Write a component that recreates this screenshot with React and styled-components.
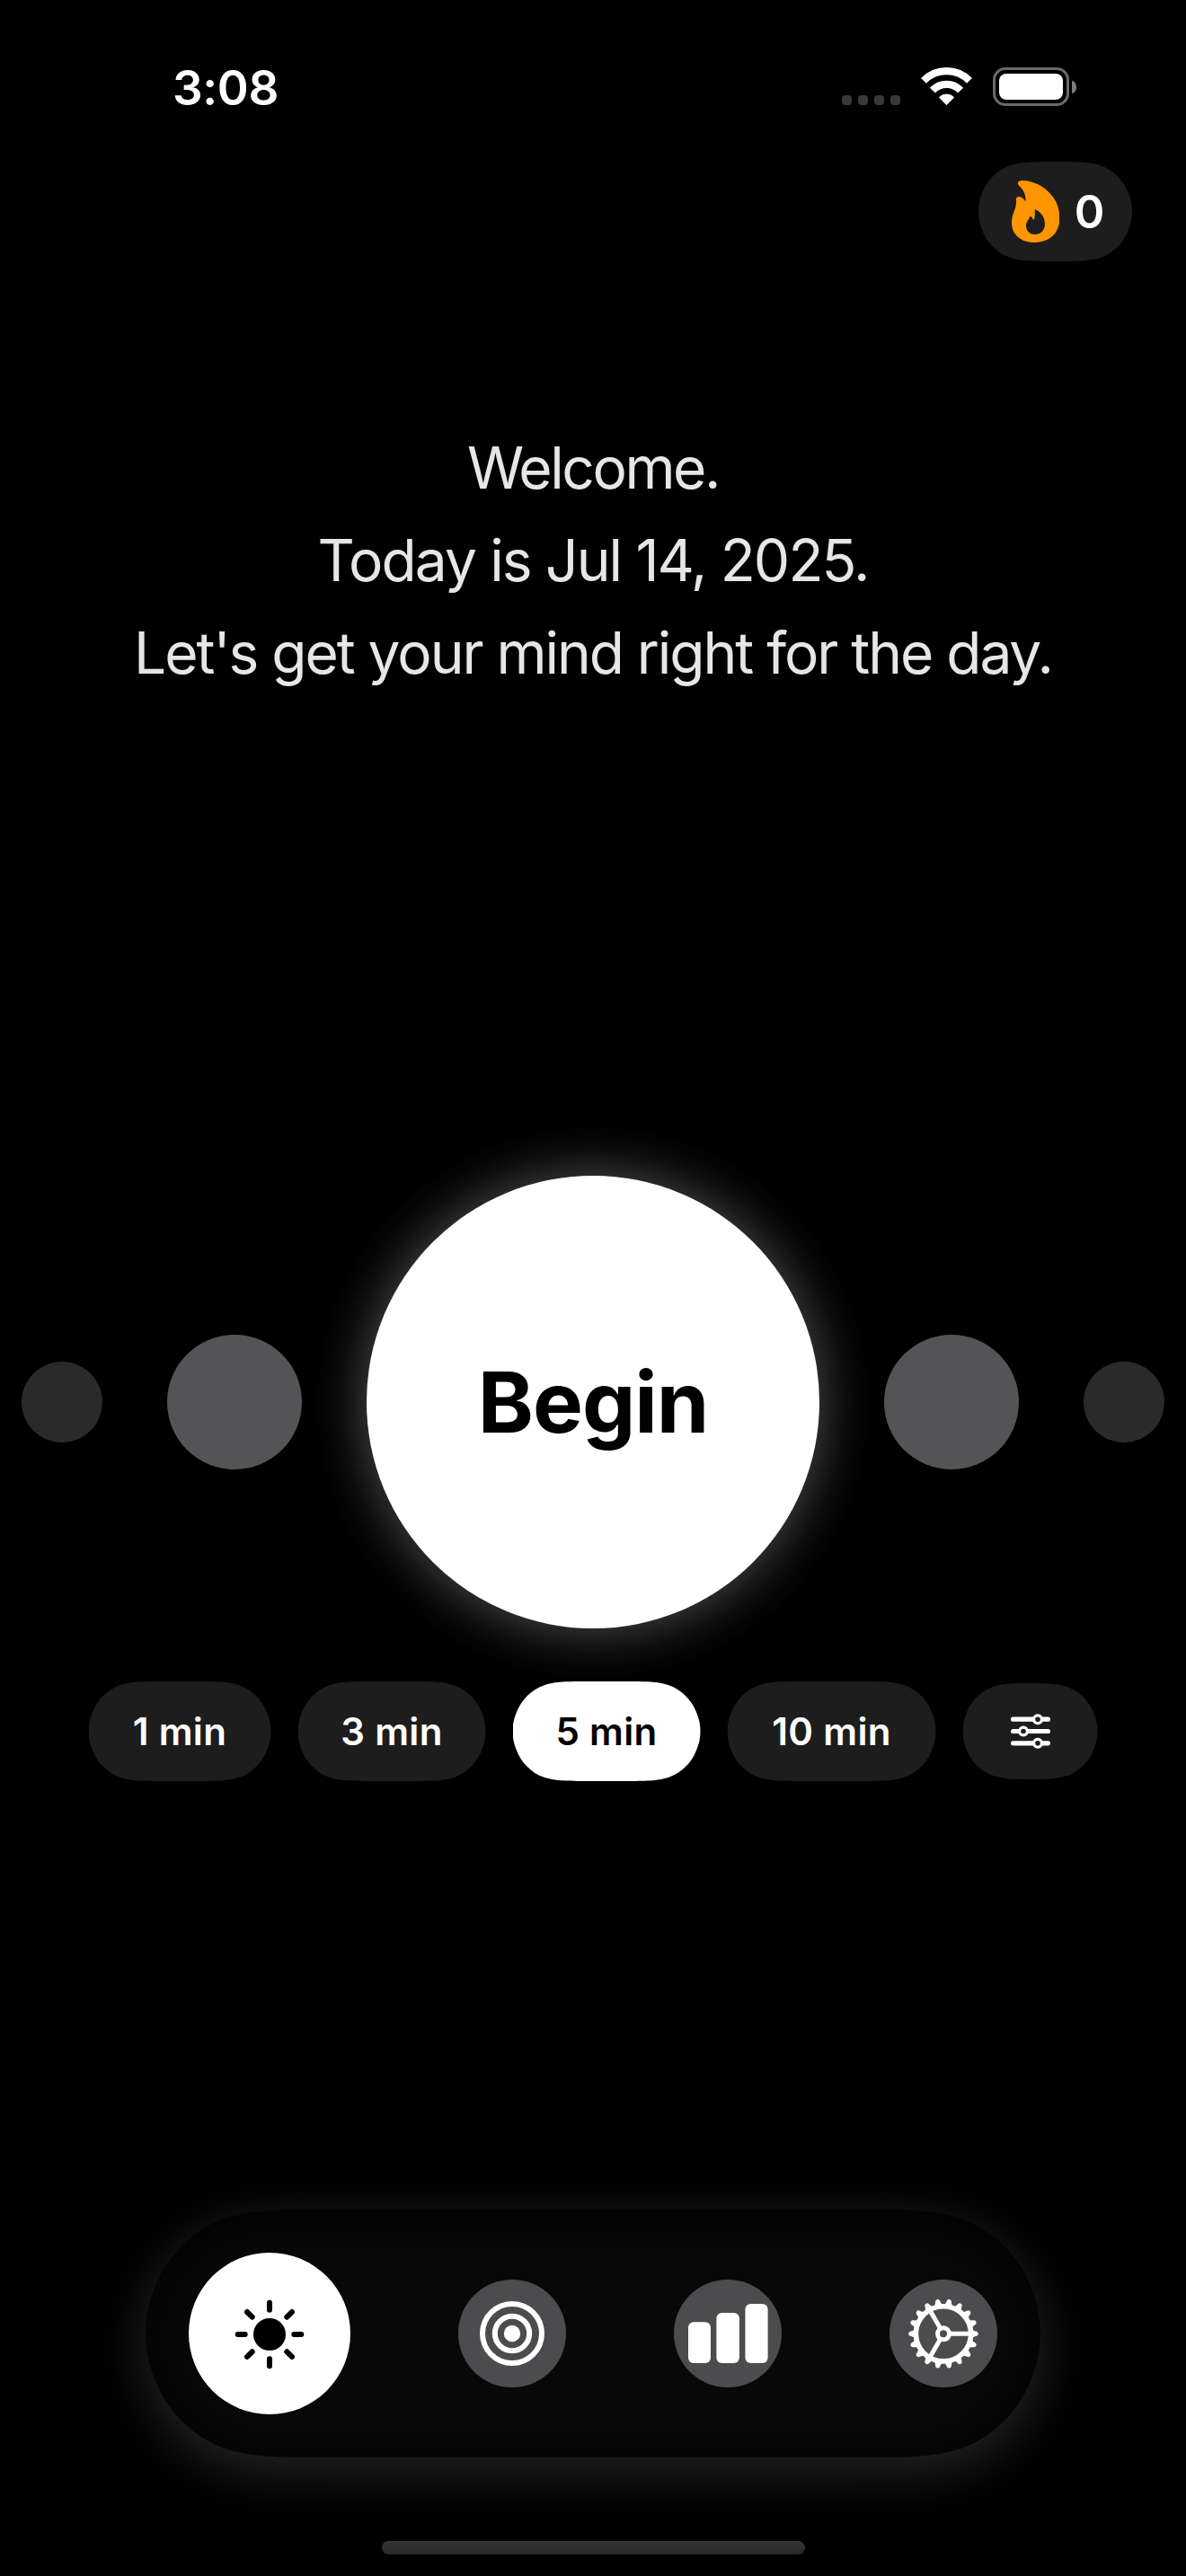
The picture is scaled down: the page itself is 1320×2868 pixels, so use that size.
import React from "react";
import styled, { createGlobalStyle } from "styled-components";

/* Continuous-corner capsule outline for a w x h box. */
const capsule = (w, h) => {
  const r = h / 2;
  const e = Math.min(1.528665 * r, w / 2);
  const p = (fx, fy, right, bottom) => {
    const x = fx * r;
    const y = fy * r;
    return `${(right ? w - x : x).toFixed(2)} ${(bottom ? h - y : y).toFixed(2)}`;
  };
  const k = e / r;
  const out = (rt, bt) =>
    `C${p(1.0885, 0, rt, bt)} ${p(0.8684, 0, rt, bt)} ${p(0.6315, 0.0749, rt, bt)}` +
    `C${p(0.3728, 0.1691, rt, bt)} ${p(0.1691, 0.3728, rt, bt)} ${p(0.0749, 0.6315, rt, bt)}` +
    `C${p(0.025, 0.75, rt, bt)} ${p(0, 0.87, rt, bt)} ${p(0, 1, rt, bt)}`;
  const back = (rt, bt) =>
    `C${p(0, 0.87, rt, bt)} ${p(0.025, 0.75, rt, bt)} ${p(0.0749, 0.6315, rt, bt)}` +
    `C${p(0.1691, 0.3728, rt, bt)} ${p(0.3728, 0.1691, rt, bt)} ${p(0.6315, 0.0749, rt, bt)}` +
    `C${p(0.8684, 0, rt, bt)} ${p(1.0885, 0, rt, bt)} ${p(k, 0, rt, bt)}`;
  return `path("M${p(k, 0, true, false)}${out(true, false)}${back(true, true)}L${p(k, 0, false, true)}${out(false, true)}${back(false, false)}Z")`;
};

const GlobalStyle = createGlobalStyle`
  * { box-sizing: border-box; }
  body { margin: 0; background: #000; }
  button { border: 0; margin: 0; padding: 0; font: inherit; color: inherit; }
`;

const Screen = styled.main`
  display: flex;
  flex-direction: column;
  align-items: center;
  width: 1320px;
  height: 2868px;
  overflow: hidden;
  background: #000;
  color: #fff;
  font-family: Inter, "Liberation Sans", sans-serif;
`;

const StatusBar = styled.header`
  display: flex;
  justify-content: space-between;
  align-items: flex-end;
  width: 100%;
  height: 118px;
  padding: 0 122px 0 192px;
`;

const Clock = styled.time`
  font-size: 53px;
  line-height: 40px;
  font-weight: 600;
  letter-spacing: -0.4px;
`;

const StatusIcons = styled.div`
  display: flex;
  align-items: flex-end;
`;

const Signal = styled.div`
  display: flex;
  gap: 7px;
  margin: 0 23px 1px 0;
`;

const SignalDot = styled.i`
  width: 11px;
  height: 11px;
  border-radius: 4px;
  background: #393939;
`;

const Battery = styled.div`
  display: flex;
  align-items: center;
  gap: 3px;
  margin-left: 23px;
`;

const BatteryCase = styled.div`
  width: 85px;
  height: 43px;
  padding: 4px;
  border: 3px solid #6a6a6a;
  border-radius: 14px;
`;

const BatteryLevel = styled.div`
  height: 100%;
  border-radius: 8px;
  background: #fff;
`;

const BatteryTip = styled.div`
  width: 5px;
  height: 14px;
  border-radius: 0 5px 5px 0 / 0 7px 7px 0;
  background: #7d7d7d;
`;

const StreakRow = styled.div`
  display: flex;
  justify-content: flex-end;
  width: 100%;
  padding: 62px 60px 0 0;
`;

const Pill = styled.button`
  display: flex;
  align-items: center;
  justify-content: center;
  flex: none;
  width: ${(p) => p.$w}px;
  height: ${(p) => p.$h || 111}px;
  clip-path: ${(p) => capsule(p.$w, p.$h || 111)};
  background: ${(p) => (p.$active ? "#fff" : "#1d1d1d")};
  color: ${(p) => (p.$active ? "#000" : "#fff")};
  font-size: 42px;
  font-weight: 600;
  letter-spacing: 0.3px;
`;

const StreakCount = styled.span`
  margin: 0 -5px 0 17px;
  font-size: 51px;
  letter-spacing: -1px;
`;

const Greeting = styled.p`
  margin: 178px 0 0;
  color: #e6e6e6;
  font-size: 64px;
  line-height: 103px;
  font-weight: 400;
  text-align: center;
`;

const Line = styled.span`
  display: block;
  letter-spacing: ${(p) => p.$track}px;
`;

const Carousel = styled.section`
  display: flex;
  align-items: center;
  gap: 72px;
  margin-top: 531px;
`;

const Dot = styled.div`
  flex: none;
  width: ${(p) => (p.$far ? 90 : 150)}px;
  height: ${(p) => (p.$far ? 90 : 150)}px;
  border-radius: 50%;
  background: ${(p) => (p.$far ? "#2a2a2a" : "#545456")};
`;

const BeginButton = styled.button`
  flex: none;
  width: 504px;
  height: 504px;
  border-radius: 50%;
  background: #fff;
  color: #000;
  font-size: 94px;
  font-weight: 700;
  letter-spacing: -1px;
  box-shadow: 0 0 60px rgba(255, 255, 255, 0.3), 0 0 120px rgba(255, 255, 255, 0.05);
`;

const Durations = styled.div`
  display: flex;
  align-items: center;
  gap: 30px;
  margin: 59px 0 477px;
`;

const NavGlow = styled.nav`
  filter: drop-shadow(0 15px 30px rgba(255, 255, 255, 0.15));
`;

const NavSurface = styled.div`
  display: flex;
  align-items: center;
  justify-content: space-between;
  width: 996px;
  height: 276px;
  padding: 0 48px;
  border-radius: 138px;
  clip-path: ${capsule(996, 276)};
  background: #080808;
  box-shadow: inset 0 8px 60px rgba(0, 0, 0, 0.9);
`;

const NavButton = styled.button`
  display: flex;
  align-items: center;
  justify-content: center;
  width: ${(p) => (p.$active ? 180 : 120)}px;
  height: ${(p) => (p.$active ? 180 : 120)}px;
  border-radius: 50%;
  background: ${(p) => (p.$active ? "#fff" : "#4c4c4e")};
  color: ${(p) => (p.$active ? "#000" : "#fff")};
`;

const HomeIndicator = styled.div`
  width: 471px;
  height: 15px;
  margin-top: 93px;
  border-radius: 8px;
  background: linear-gradient(#343434, #292929);
`;

const WifiIcon = () => (
  <svg width="57" height="43" viewBox="375 75 171 129" fill="none" stroke="#fff" strokeWidth="25">
    <path d="M384 119.500A107.500 107.500 0 0 1 537 119.500" />
    <path d="M413.700 152A63.500 63.500 0 0 1 507.300 152" />
    <path d="M436 175.500A34 34 0 0 1 485 175.500L460.500 200Z" fill="#fff" strokeWidth="3" strokeLinejoin="round" />
  </svg>
);

const FlameIcon = () => (
  <svg width="53.300" height="69" viewBox="120 75 160 207">
    <path
      fill="#ff9500"
      fillRule="evenodd"
      d="M141 82C143 76 149 75 156 75C190 76 226 92 250 120C271 144 280 168 280 204C280 251 245 282 195 282C150 282 120 255 120 217C120 180 137 175 135 137C135 129 142 127 150 130C157 133 163 139 166 146C169 125 161 108 143 90C141 87 140 84 141 82Z
         M197 171C215 178 231 195 231 220C231 242 215 255 198 255C180 255 168 243 168 226C168 211 178 208 181 194C187 195 190 201 193 208C198 198 198 188 197 171Z"
    />
  </svg>
);

const SlidersIcon = () => (
  <svg width="44" height="39" viewBox="0 0 44 39" fill="none" stroke="#fff" strokeLinecap="round">
    {[[30, 6.2], [14, 19.500], [30, 32.800]].map(([x, y]) => (
      <g key={y}>
        <path d={`M2.600 ${y}H41.400`} strokeWidth="5.200" />
        <circle cx={x} cy={y} r="4.400" fill="#1d1d1d" strokeWidth="3.200" />
      </g>
    ))}
  </svg>
);

const SunIcon = () => (
  <svg width="80" height="80" viewBox="-40 -41 80 80" fill="currentColor">
    <circle r="18" />
    {[0, 45, 90, 135, 180, 225, 270, 315].map((a) => (
      <path key={a} d="M27.300 0H35.300" transform={`rotate(${a})`} stroke="currentColor" strokeWidth="6" strokeLinecap="round" />
    ))}
  </svg>
);

const TargetIcon = () => (
  <svg width="80" height="80" viewBox="-40 -40 80 80" fill="none" stroke="currentColor" strokeWidth="6">
    <circle r="33" />
    <circle r="19.200" />
    <circle r="9.200" fill="currentColor" stroke="none" />
  </svg>
);

const BarsIcon = () => (
  <svg width="90" height="70" viewBox="-45 -35 90 70" fill="currentColor">
    <rect x="-44" y="-12.700" width="25" height="45.700" rx="6" />
    <rect x="-12.600" y="-23" width="25.500" height="56" rx="6" />
    <rect x="19.400" y="-33" width="25.200" height="66" rx="6" />
  </svg>
);

const GearIcon = () => (
  <svg width="80" height="80" viewBox="-40 -40.300 80 80" fill="none" stroke="currentColor">
    <circle r="30.600" strokeWidth="5.600" />
    <circle r="6.500" strokeWidth="5" />
    {[0, 120, 240].map((a) => (
      <path key={a} d="M8 0H29" transform={`rotate(${a})`} strokeWidth="5" />
    ))}
    {Array.from({ length: 18 }, (_, i) => (
      <path
        key={i}
        d="M32 -4.600C34 -3.300 35.500 -2.800 37 -2.500Q38.800 -2 38.800 0Q38.800 2 37 2.500C35.500 2.800 34 3.300 32 4.600Z"
        transform={`rotate(${i * 20})`}
        fill="currentColor"
        stroke="none"
      />
    ))}
  </svg>
);

const DURATIONS = [
  { label: "1 min", width: 203 },
  { label: "3 min", width: 209 },
  { label: "5 min", width: 209, active: true },
  { label: "10 min", width: 232 },
];

const TABS = [
  { name: "Today", Icon: SunIcon, active: true },
  { name: "Focus", Icon: TargetIcon },
  { name: "Stats", Icon: BarsIcon },
  { name: "Settings", Icon: GearIcon },
];

export default function App() {
  return (
    <Screen>
      <GlobalStyle />
      <StatusBar>
        <Clock>3:08</Clock>
        <StatusIcons>
          <Signal>
            <SignalDot />
            <SignalDot />
            <SignalDot />
            <SignalDot />
          </Signal>
          <WifiIcon />
          <Battery>
            <BatteryCase>
              <BatteryLevel />
            </BatteryCase>
            <BatteryTip />
          </Battery>
        </StatusIcons>
      </StatusBar>

      <StreakRow>
        <Pill $w={171}>
          <FlameIcon />
          <StreakCount>0</StreakCount>
        </Pill>
      </StreakRow>

      <Greeting>
        <Line $track={-2.4}>Welcome.</Line>
        <Line $track={-1.85}>Today is Jul 14, 2025.</Line>
        <Line $track={-2.04}>Let's get your mind right for the day.</Line>
      </Greeting>

      <Carousel>
        <Dot $far />
        <Dot />
        <BeginButton>Begin</BeginButton>
        <Dot />
        <Dot $far />
      </Carousel>

      <Durations>
        {DURATIONS.map((d) => (
          <Pill key={d.label} $w={d.width} $active={d.active}>
            {d.label}
          </Pill>
        ))}
        <Pill $w={150} $h={107}>
          <SlidersIcon />
        </Pill>
      </Durations>

      <NavGlow>
        <NavSurface>
          {TABS.map(({ name, Icon, active }) => (
            <NavButton key={name} $active={active}>
              <Icon />
            </NavButton>
          ))}
        </NavSurface>
      </NavGlow>

      <HomeIndicator />
    </Screen>
  );
}
